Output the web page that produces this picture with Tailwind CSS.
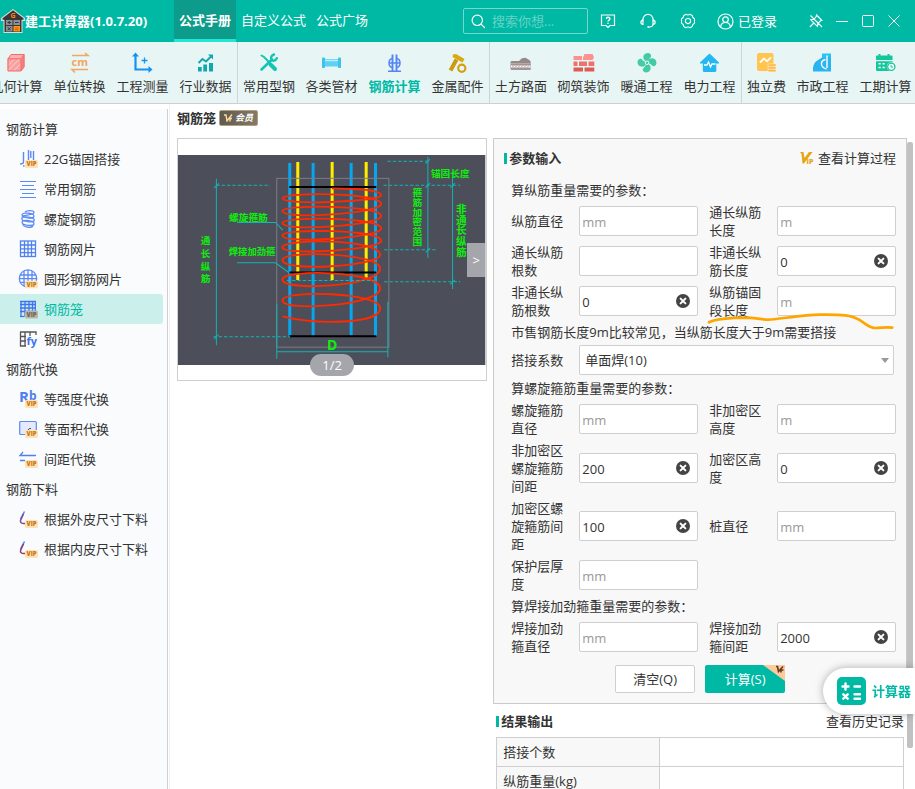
<!DOCTYPE html>
<html lang="zh-CN">
<head>
    <meta charset="UTF-8">
    <meta name="viewport" content="width=device-width, initial-scale=1.0">
    <title>建工计算器</title>
    <script src="https://cdn.jsdelivr.net/npm/@tailwindcss/browser@4"></script>
    <style>
        body {
            font-family: 'Open Sans', 'Noto Sans CJK SC', sans-serif;
        }
    </style>
</head>
<body class="h-screen overflow-hidden flex flex-col bg-white text-[13px] leading-[18px] text-[#333]">

    <!-- shared symbols -->
    <svg class="hidden">
        <symbol id="vip" viewBox="0 0 13 8">
            <rect width="13" height="8" rx="1.5" fill="#ffe2b3" stroke="none"/>
            <text x="6.5" y="6.3" text-anchor="middle" font-size="6" font-weight="800" fill="#c8781a" stroke="none">VIP</text>
        </symbol>
        <symbol id="clear" viewBox="0 0 14 14">
            <circle cx="7" cy="7" r="7" fill="#444"/>
            <path d="M4.6 4.6l4.8 4.8M9.4 4.6l-4.8 4.8" stroke="#fff" stroke-width="2" stroke-linecap="round"/>
        </symbol>
    </svg>

    <!-- title bar -->
    <header class="h-[42px] shrink-0 flex items-center bg-[#00b9a5] text-white overflow-hidden">
        <svg class="w-6 h-6 ml-px shrink-0" viewBox="0 0 24 24">
            <path d="M12 0L0 9v3h2.500V24h19V12H24V9z" fill="#d9dcdc"/>
            <path d="M12 1.200L1.500 9.300v1.500h2V23h17V10.800h2V9.300z" fill="#3b3536"/>
            <text x="12" y="9" text-anchor="middle" font-size="7" font-weight="700" fill="#f08c1a">G</text>
            <path d="M5 11h6.500v5H5zM12.500 11H19v5h-6.500zM5 17h6.500v5.500H5z" fill="#8b8f96"/>
            <path d="M12.500 17H19v5.500h-6.500z" fill="#ff9416"/>
            <path d="M6.500 13.500h3.500M8.200 12v3M14 13.500h3.500M6.700 18.200l3 3M9.700 18.200l-3 3" stroke="#333" stroke-width="1"/>
            <path d="M14 19h3.500M14 20.700h3.500" stroke="#b35c00" stroke-width=".8"/>
        </svg>
        <h1 class="w-[149px] shrink-0 font-bold whitespace-nowrap">建工计算器(1.0.7.20)</h1>
        <nav class="h-full flex items-center shrink-0">
            <a href="#" class="h-full px-[5px] pt-[11px] bg-[#0d9b8b] border-b-[3px] border-[#22e6d2] font-bold">公式手册</a>
            <a href="#" class="px-[5px] -mt-[3px]">自定义公式</a>
            <a href="#" class="px-[5px] -mt-[3px]">公式广场</a>
        </nav>
        <div class="flex-1"></div>
        <label class="w-[125px] h-[26px] shrink-0 flex items-center border border-[#73d8ce] rounded-xs">
            <svg class="w-[15px] h-[15px] ml-[7px] shrink-0" viewBox="0 0 15 15" fill="none" stroke="#fff" stroke-width="1.200" stroke-linecap="round"><circle cx="6.300" cy="6.300" r="5.200"/><path d="M10.300 10.300L13.500 13.500"/></svg>
            <input type="text" aria-label="搜索" placeholder="搜索你想..." class="min-w-0 flex-1 pl-[6px] outline-none placeholder:text-[#66d3c8]">
        </label>
        <button aria-label="帮助" class="w-10 shrink-0 flex justify-center">
            <svg class="w-4 h-4" viewBox="0 0 16 16" fill="none" stroke="#fff" stroke-width="1.200"><path d="M1.500 2h13v10.500H10L8 14.500 6 12.500H1.500z"/><path d="M6.300 6c0-2.300 3.600-2.200 3.600-.2C9.900 7.200 8 7 8 8.600" stroke-width="1.400"/><path d="M8 9.700v1.200" stroke-width="1.400"/></svg>
        </button>
        <button aria-label="客服" class="w-10 shrink-0 flex justify-center">
            <svg class="w-4 h-4" viewBox="0 0 16 16" fill="none" stroke="#fff" stroke-width="1.200"><path d="M2.800 7.500C2.800-.8 13.200-.8 13.200 7.500"/><path d="M3 7.200C.2 7.200.2 11.500 3 11.500zM13 7.200c2.800 0 2.800 4.300 0 4.300z"/><path d="M13 11.500c-.3 1.700-1.500 2.400-3.500 2.500" /><path d="M7.500 14h2" stroke-width="1.800"/></svg>
        </button>
        <button aria-label="设置" class="w-10 shrink-0 flex justify-center">
            <svg class="w-4 h-4" viewBox="0 0 16 16" fill="none" stroke="#fff" stroke-width="1.100" stroke-linejoin="round"><path d="M6 1.300Q8 2.600 10 1.300L12.200 2.500Q12.300 4.700 14.500 5.700V8 10.300Q12.300 11.300 12.200 13.500L10 14.700Q8 13.400 6 14.700L3.800 13.500Q3.700 11.300 1.500 10.300V5.700Q3.700 4.700 3.800 2.500z"/><path d="M8 5.200l2.500 1.400v2.800L8 10.800 5.500 9.400V6.600z"/></svg>
        </button>
        <button class="w-[86px] pl-[9px] shrink-0 flex items-center gap-1">
            <svg class="w-[17px] h-[17px]" viewBox="0 0 17 17" fill="none" stroke="#fff" stroke-width="1.200"><circle cx="8.500" cy="8.500" r="7.500"/><circle cx="8.500" cy="6.600" r="2.800"/><path d="M3.700 14c.3-6 9.300-6 9.600 0"/></svg>
            已登录
        </button>
        <button aria-label="置顶" class="w-[26px] ml-[9px] shrink-0 flex justify-center">
            <svg class="w-[14px] h-[14px]" viewBox="0 0 14 14" fill="none" stroke="#fff" stroke-width="1.100"><path d="M7.500 1l5.500 5.500-1.500.3-2.600 2.600-.5 3L1.800 5.800l3-.5 2.500-2.700zM4.800 9L.8 13M1.500 1.500l11.500 11.500"/></svg>
        </button>
        <button aria-label="最小化" class="w-[26px] shrink-0 flex justify-center">
            <svg class="w-[14px] h-[14px]" viewBox="0 0 14 14" stroke="#fff"><path d="M1 7.500h12"/></svg>
        </button>
        <button aria-label="最大化" class="w-[26px] shrink-0 flex justify-center">
            <svg class="w-[14px] h-[14px]" viewBox="0 0 14 14" fill="none" stroke="#fff"><rect x="1.500" y="1.500" width="11" height="11" rx="1"/></svg>
        </button>
        <button aria-label="关闭" class="w-[26px] mr-2 shrink-0 flex justify-center">
            <svg class="w-[14px] h-[14px]" viewBox="0 0 14 14" fill="none" stroke="#fff"><path d="M1.500 1.500l11 11M12.500 1.500l-11 11"/></svg>
        </button>
    </header>

    <!-- category bar -->
    <nav class="h-[62px] shrink-0 flex bg-[#e7f6f5] border-b border-[#cfcfd3] overflow-hidden whitespace-nowrap">
        <div class="flex shrink-0 -ml-[15px]">
            <a href="#" class="w-[63px] pt-[9px] flex flex-col items-center gap-[2px]">
                <svg class="w-6 h-6" viewBox="0 0 24 24"><path d="M2.500 8L6 3.500h13.500L16 8z" fill="#ffb0b0"/><path d="M16 8l3.500-4.500V16L16 20z" fill="#f78080"/><rect x="2.500" y="7.500" width="13.500" height="12.500" rx="1" fill="#f9a0a0"/><path d="M3.500 14l6-6M3.500 19L14.500 8M9 19.500l6.500-6.500" stroke="#ffd6d6"/><path d="M3 7.800L6 3.500h13V16l-3 4H3z M3 7.800h13V20M16 7.800l3-4.300" fill="none" stroke="#f56b6b"/></svg>
                几何计算
            </a>
            <a href="#" class="w-[63px] pt-[9px] flex flex-col items-center gap-[2px]">
                <svg class="w-6 h-6" viewBox="0 0 24 24" fill="none" stroke="#f0a762" stroke-width="1.600"><path d="M4 4.500h16L17 2M20 18.500H4l3 3"/><text x="11.800" y="15" text-anchor="middle" font-size="11" font-weight="700" fill="#f0a762" stroke="none">cm</text></svg>
                单位转换
            </a>
            <a href="#" class="w-[63px] pt-[9px] flex flex-col items-center gap-[2px]">
                <svg class="w-6 h-6" viewBox="0 0 24 24" fill="none" stroke="#1493f0" stroke-width="2.200"><path d="M4.500 4v14.500H19"/><path d="M4.500 1.500L8 5.500H1zM21.500 18.500l-4-3.500v7z" fill="#1493f0" stroke="none"/><path d="M13.500 6.500v6M10.500 9.500h6" stroke-width="1.300"/></svg>
                工程测量
            </a>
            <a href="#" class="w-[63px] pt-[9px] flex flex-col items-center gap-[2px]">
                <svg class="w-6 h-6" viewBox="0 0 24 24"><path d="M4 16h3.700v4.500H4zM9.300 13.500H13v7H9.300zM15 12h4v8.500h-4z" fill="#12a7b0"/><path d="M4.500 12l4-4 3.500 2.500L17 5.500" fill="none" stroke="#12a7b0" stroke-width="1.900"/><path d="M14 3.500h5v5z" fill="#12a7b0"/></svg>
                行业数据
            </a>
        </div>
        <div class="flex shrink-0">
            <a href="#" class="w-[63px] pt-[9px] flex flex-col items-center gap-[2px] border-l border-[#cfd3d6]">
                <svg class="w-6 h-6" viewBox="0 0 24 24" fill="none" stroke="#16c4b4" stroke-linecap="round"><path d="M4.500 4.500L7 6l6 6" stroke-width="2"/><path d="M13.500 13.500l4.500 4.500" stroke-width="4"/><path d="M4.500 18.500L15 8.500" stroke-width="2.600"/><path d="M17 3.500c-3 1-3.500 3-2.500 5s4 1.500 5.300-1.300" stroke-width="2.400"/></svg>
                常用型钢
            </a>
            <a href="#" class="w-[63px] pt-[9px] flex flex-col items-center gap-[2px]">
                <svg class="w-6 h-6" viewBox="0 0 24 24"><rect x="4" y="8" width="15" height="7.500" fill="#5dd2f2"/><path d="M4 9.500h15" stroke="#b5f0fc" stroke-width="1.500"/><rect x="2" y="6.500" width="3" height="10.500" rx=".8" fill="#3fc3ea"/><rect x="18" y="6.500" width="3" height="10.500" rx=".8" fill="#3fc3ea"/></svg>
                各类管材
            </a>
            <a href="#" class="w-[63px] pt-[9px] flex flex-col items-center gap-[2px] font-bold text-[#00b9a5]">
                <svg class="w-6 h-6" viewBox="0 0 24 24" fill="none" stroke="#5585f5" stroke-width="1.500"><path d="M9.500 3.500v17M13.500 3.500v17" stroke-width="1.900"/><path d="M9 7.500c-4 1-4 8 0 9M14 7.500c4 1 4 8 0 9M6.500 12h10M5 20.300h13"/></svg>
                钢筋计算
            </a>
            <a href="#" class="w-[63px] pt-[9px] flex flex-col items-center gap-[2px]">
                <svg class="w-6 h-6" viewBox="0 0 24 24" fill="none"><path d="M10.500 8.500L4.500 19.500" stroke="#c99a12" stroke-width="4"/><path d="M7 3.500l3-.5L18.500 8l-2 3.500L6.500 6z" fill="#dba90f"/><path d="M12.800 13.200h5l2.600 4-2.600 4h-5l-2.400-4z" fill="#e7f6f5"/><circle cx="15.800" cy="17.200" r="3.600" stroke="#d2a010" stroke-width="2.200"/></svg>
                金属配件
            </a>
        </div>
        <div class="flex shrink-0">
            <a href="#" class="w-[63px] pt-[9px] flex flex-col items-center gap-[2px] border-l border-[#cfd3d6]">
                <svg class="w-6 h-6" viewBox="0 0 24 24"><path d="M1.500 11Q1.500 10 3 10h7q3-4 7-3l4 2.500.8 2v1H1.500z" fill="#97898a"/><path d="M1.500 12.500h20.300V18q0 1-1 1H2.500q-1 0-1-1z" fill="#a39596"/><path d="M2 15.500h19.500" stroke="#fff" stroke-width="2"/><path d="M3 16.500l2-2M6 16.500l2-2M9 16.500l2-2M12 16.500l2-2M15 16.500l2-2M18 16.500l2-2" stroke="#8a7b7c" stroke-width=".8"/></svg>
                土方路面
            </a>
            <a href="#" class="w-[63px] pt-[9px] flex flex-col items-center gap-[2px]">
                <svg class="w-6 h-6" viewBox="0 0 24 24"><path d="M1.500 5H10v4H1.500zM11 6.500L12.500 3h8l1.500 3.500L20.500 9H11z" fill="#fb9290"/><path d="M1.500 10.500h4V15h-4zM7 10.500h8V15H7zM16.500 10.500h5.800V15h-5.800z" fill="#ee716d"/><path d="M1.500 16.500H11v4H1.500zM12.500 16.500h9.800v4h-9.800z" fill="#e05a55"/></svg>
                砌筑装饰
            </a>
            <a href="#" class="w-[63px] pt-[9px] flex flex-col items-center gap-[2px]">
                <svg class="w-6 h-6" viewBox="0 0 24 24" fill="#43cba6"><path d="M12 11C6 8 8 2 13 2c3.500.5 4 3.500 2 5-1.500 1-1.500 3-3 4z"/><path d="M12 11C15 5 21.500 7 21.500 12c-.5 3.500-3.500 4-5 2-1-1.500-3-1.500-4.500-3z"/><path d="M12 12c6 3 4 9.500-1 9.500-3.500-.5-4-3.500-2-5 1.500-1 1.500-3 3-4.500z"/><path d="M12 12C9 18 2.500 16 2.500 11c.5-3.500 3.500-4 5-2 1 1.500 3 1.500 4.500 3z"/><circle cx="12" cy="11.700" r="2.200" fill="#e7f6f5"/><circle cx="12" cy="11.700" r="1.200"/></svg>
                暖通工程
            </a>
            <a href="#" class="w-[63px] pt-[9px] flex flex-col items-center gap-[2px]">
                <svg class="w-6 h-6" viewBox="0 0 24 24"><path d="M11.500 2.500L2 11.500v1h2.800v7q0 1.500 1.500 1.500h10.500q1.500 0 1.500-1.500v-7H21v-1z" fill="#23b7f4"/><path d="M6 14h3l1.500-3 2 5 1.500-3h3.500" fill="none" stroke="#fff" stroke-width="1.300"/></svg>
                电力工程
            </a>
        </div>
        <div class="flex shrink-0">
            <a href="#" class="w-[50px] pt-[9px] flex flex-col items-center gap-[2px] border-l border-[#cfd3d6]">
                <svg class="w-6 h-6" viewBox="0 0 24 24"><rect x="2" y="2" width="16.500" height="18" rx="2" fill="#ffc550"/><path d="M5 11.500L9 7.500l3 2.800 4-4" fill="none" stroke="#fff" stroke-width="1.800"/><path d="M13 13h8v2.200h-8zM13 15.800h8V18h-8zM13 18.600h8v2.200h-8z" fill="#fbb13a" stroke="#fff0cf" stroke-width=".6"/></svg>
                独立费
            </a>
            <a href="#" class="w-[63px] pt-[9px] flex flex-col items-center gap-[2px]">
                <svg class="w-6 h-6" viewBox="0 0 24 24"><path d="M2 20.500V17C3 9.500 8.500 5 20 3v17.500z" fill="#28b4f0"/><path d="M11 2.500h9v3L11 7z" fill="#28c4f5"/><path d="M2 10.500L11 2.500v4L4 11z" fill="#e7f6f5"/><path d="M16 4.500v12.500M14.500 8.500c-6 1.500-5 8 1 9.500" fill="none" stroke="#fff" stroke-width="1.400"/></svg>
                市政工程
            </a>
            <a href="#" class="w-[63px] pt-[9px] flex flex-col items-center gap-[2px]">
                <svg class="w-6 h-6" viewBox="0 0 24 24"><path d="M2 9V5.500q0-1 1-1h1.500V3h2v1.500h7V3h2v1.500h2q1 0 1 1V9zM2 10.200h16.500V20H3q-1 0-1-1z" fill="#14c79a"/><path d="M4.500 12.800h2.200M8.500 12.800h2.200M4.500 16.500h2.200M8.500 16.500h2.200" stroke="#fff" stroke-width="1.600"/><circle cx="17.300" cy="15.800" r="4.500" fill="#e7f6f5"/><circle cx="17.300" cy="15.800" r="3.600" fill="#fff" stroke="#14c79a" stroke-width="1.300"/><path d="M17 13.800v2.300h2" fill="none" stroke="#14c79a"/></svg>
                工期计算
            </a>
        </div>
    </nav>

    <div class="flex-1 min-h-0 flex">

        <!-- side menu -->
        <aside class="w-[168px] shrink-0 mt-[5px] pt-[5px] bg-[#f9fbfd] border-r border-[#cfcfcf]">
            <h2 class="h-[30px] pl-[6px] flex items-center">钢筋计算</h2>
            <a href="#" class="h-[30px] pl-[18px] flex items-center gap-[6px]">
                <svg class="w-5 h-5" viewBox="0 0 20 20" fill="none" stroke="#5b8af5" stroke-width="1.400"><path d="M5.500 3v10q0 2-3.500 2M10.500 1v12M15.500 2v10M12.800 2v7" /><path d="M5 17h3" stroke-dasharray="1.500 1"/><use href="#vip" x="7" y="11" width="13" height="8"/></svg>
                22G锚固搭接
            </a>
            <a href="#" class="h-[30px] pl-[18px] flex items-center gap-[6px]">
                <svg class="w-5 h-5" viewBox="0 0 20 20" stroke="#5b8af5" stroke-width="1.200"><path d="M2 2.500h16M4 6.500h12M2 10.500h16M4 14.500h12M2 18.500h16"/></svg>
                常用钢筋
            </a>
            <a href="#" class="h-[30px] pl-[18px] flex items-center gap-[6px]">
                <svg class="w-5 h-5" viewBox="0 0 20 20" fill="none" stroke="#5b8af5" stroke-width="1.300"><path d="M7 3c2-2 9-2 9 .5S5 6 4 7.500"/><ellipse cx="10" cy="6.500" rx="6" ry="2.300" transform="rotate(8 10 6.500)"/><ellipse cx="10" cy="10.300" rx="6.300" ry="2.300" transform="rotate(8 10 10.300)"/><ellipse cx="10" cy="14" rx="6" ry="2.300" transform="rotate(8 10 14)"/><path d="M5 15c0 3 8 4.500 10 2"/></svg>
                螺旋钢筋
            </a>
            <a href="#" class="h-[30px] pl-[18px] flex items-center gap-[6px]">
                <svg class="w-5 h-5" viewBox="0 0 20 20" fill="none" stroke="#4f80f0" stroke-width="1.300"><rect x="2.500" y="2" width="15" height="15.500"/><path d="M6.500 2v15.500M10 2v15.500M13.500 2v15.500M2.500 6h15M2.500 9.800h15M2.500 13.600h15"/></svg>
                钢筋网片
            </a>
            <a href="#" class="h-[30px] pl-[18px] flex items-center gap-[6px]">
                <svg class="w-5 h-5" viewBox="0 0 20 20" fill="none" stroke="#5b8af5" stroke-width="1.300"><circle cx="10" cy="9.500" r="8.700"/><path d="M6 2v15M10 1v17M14 2v15M2 6h16M1.500 9.700h17M2 13.400h16"/><use href="#vip" x="7" y="11.500" width="13" height="8"/></svg>
                圆形钢筋网片
            </a>
            <a href="#" class="h-[30px] mr-1 pl-[18px] flex items-center gap-[6px] bg-[#cbf0eb] text-[#00b9a5] rounded-r-[3px]">
                <svg class="w-5 h-5" viewBox="0 0 20 20" fill="none" stroke="#3f74ee" stroke-width="1.300"><path d="M2 2.500h16M2 5.500h16M2 9h16M2 12.500h16M3 2v16M7 2v16M11 2v16M14.500 2v16M17.300 2v12"/><path d="M2 17.500h4" /><rect x="7" y="11.500" width="13" height="8" rx="1.500" fill="#b9b5a5" stroke="none"/><text x="13.500" y="17.800" text-anchor="middle" font-size="6" font-weight="800" fill="#6e675c" stroke="none">VIP</text></svg>
                钢筋笼
            </a>
            <a href="#" class="h-[30px] pl-[18px] flex items-center gap-[6px]">
                <svg class="w-5 h-5" viewBox="0 0 20 20" fill="none" stroke="#555" stroke-width="1.300"><path d="M2 3h16v3M2.500 3v14H8M2 7.500h6M2 12h6M7 3v14M12 3v4"/><text x="8.500" y="15.500" font-size="11" font-weight="700" fill="#3f74ee" stroke="none">fy</text></svg>
                钢筋强度
            </a>
            <h2 class="h-[30px] pl-[6px] flex items-center">钢筋代换</h2>
            <a href="#" class="h-[30px] pl-[18px] flex items-center gap-[6px]">
                <svg class="w-5 h-5 overflow-visible" viewBox="0 0 20 20"><text x="1" y="12.500" font-size="15" font-weight="700" fill="#4f80f0">R<tspan y="10.500" font-size="12">b</tspan></text><use href="#vip" x="7" y="11" width="13" height="8"/></svg>
                等强度代换
            </a>
            <a href="#" class="h-[30px] pl-[18px] flex items-center gap-[6px]">
                <svg class="w-5 h-5" viewBox="0 0 20 20"><rect x="1.700" y="2.500" width="16.600" height="13" rx="1" fill="#e3eafc" stroke="#5b8af5" stroke-width="1.200"/><path d="M10 11q1-2 3-1.500" fill="none" stroke="#444"/><use href="#vip" x="7" y="11" width="13" height="8"/></svg>
                等面积代换
            </a>
            <a href="#" class="h-[30px] pl-[18px] flex items-center gap-[6px]">
                <svg class="w-5 h-5" viewBox="0 0 20 20" fill="none" stroke="#4f80f0" stroke-width="1.300"><path d="M5 3L2 6.500h16M2 11.500h5"/><use href="#vip" x="7" y="11" width="13" height="8"/></svg>
                间距代换
            </a>
            <h2 class="h-[30px] pl-[6px] flex items-center">钢筋下料</h2>
            <a href="#" class="h-[30px] pl-[18px] flex items-center gap-[6px]">
                <svg class="w-5 h-5" viewBox="0 0 20 20" fill="none"><path d="M6.500 2.500L2.500 10" stroke="#4f80f0" stroke-width="1.500"/><path d="M5.500 5L2.500 11.500Q2 15 7 14.500" stroke="#7a4a9c" stroke-width="1.500"/><use href="#vip" x="7" y="11" width="13" height="8"/></svg>
                根据外皮尺寸下料
            </a>
            <a href="#" class="h-[30px] pl-[18px] flex items-center gap-[6px]">
                <svg class="w-5 h-5" viewBox="0 0 20 20" fill="none"><path d="M6.500 2.500L2.500 10" stroke="#4f80f0" stroke-width="1.500"/><path d="M5.500 5L2.500 11.500Q2 15 7 14.500" stroke="#8c3f6c" stroke-width="1.500"/><use href="#vip" x="7" y="11" width="13" height="8"/></svg>
                根据内皮尺寸下料
            </a>
        </aside>

        <main class="relative flex-1 min-w-0 ml-px border-l border-[#f0f0f0] pl-[7px] pr-2">
            <div class="h-[34px] flex items-start pt-[5px] gap-[3px]">
                <h2 class="font-bold">钢筋笼</h2>
                <span class="w-[39px] h-4 mt-px flex items-center justify-center gap-[2px] rounded-xs border border-[#b39f7c] bg-linear-to-r from-[#5e5a50] to-[#857a64] text-[9px] leading-[14px] font-bold italic text-white">
                    <svg class="w-[9px] h-2" viewBox="0 0 9 8" fill="none" stroke="#ffd9a0" stroke-width="1.400"><path d="M0 1h2l1 6 5-6.500M6 7.500V4.500h2"/></svg>会员
                </span>
            </div>

            <div class="grid grid-cols-[3fr_4fr] gap-[6px] items-start">

                <!-- drawing preview -->
                <figure class="relative border border-[#cfcfcf] pt-4 pb-[15px]">
                    <svg class="block w-full" viewBox="24 150 924 630" fill="none">
                        <rect x="24" y="150" width="921" height="630" fill="#4c4e59"/>
                        <g stroke="#06a7f0" stroke-width="9"><path d="M359 174V692M429 174V692M543 174V692M616 174V692"/></g>
                        <g stroke="#ffee00" stroke-width="9"><path d="M383 171V525M486 171V525M588 171V525"/></g>
                        <rect x="320" y="220" width="336" height="506" stroke="#7b7d86" stroke-width="3"/>
                        <path d="M360 246H616M360 502H616M360 693H616" stroke="#000" stroke-width="6" stroke-linecap="round"/>
                        <path d="M485 250C560 250 633 256 633 270C633 290 337 302 337 280C337 260 633 262 633 297C633 325 337 345 337 318C337 297 633 300 633 333C633 361 337 381 337 354C337 333 633 336 633 370C633 398 337 418 337 391C337 370 633 373 633 407C633 435 337 452 337 427C337 400 630 400 630 450C630 482 337 502 337 465C337 434 630 444 630 490C630 545 337 560 337 523C337 492 630 496 630 550C630 600 337 622 337 585C337 555 630 560 630 610C630 656 440 660 337 634" stroke="#ff2a00" stroke-width="5.500"/>
                        <g stroke="#12b5b5" stroke-width="3">
                            <path d="M139 221V720M320 597V761M653 590V756M320 740H653M773 155V459M847 200V552"/>
                            <path d="M201 352H316L338 375M201 473H316L357 503"/>
                            <path d="M132 249L146 235M132 702L146 688M766 176L780 162M766 248L780 234M766 442L780 428M840 248L854 234M840 538L854 524"/>
                            <path d="M139 241H300M130 695H360M350 526H610M652 169H780M640 241H870M642 434H800M642 530H870" stroke-dasharray="10 6"/>
                        </g>
                        <g fill="#0cf00c" font-weight="700" font-size="29" text-anchor="middle">
                            <text x="235" y="347">螺旋箍筋</text>
                            <text x="246" y="449" font-size="28">焊接加劲箍</text>
                            <text x="840" y="217">锚固长度</text>
                            <text x="486" y="735" font-size="42">D</text>
                            <text><tspan x="107" y="418">通</tspan><tspan x="107" y="456">长</tspan><tspan x="107" y="494">纵</tspan><tspan x="107" y="531">筋</tspan></text>
                            <text x="740" y="335" writing-mode="vertical-rl">箍筋加密范围</text>
                            <text x="872" y="376" font-size="32" writing-mode="vertical-rl">非通长纵筋</text>
                        </g>
                    </svg>
                    <button aria-label="下一张" class="absolute right-px top-1/2 -translate-y-1/2 w-[18px] h-[34px] bg-[#a5a6ac] text-white">&gt;</button>
                    <figcaption class="absolute left-1/2 -translate-x-1/2 bottom-1 w-11 h-[22px] rounded-full bg-[#a5a6ac] text-white text-center leading-[22px]">1/2</figcaption>
                </figure>

                <div>
                    <!-- input parameters -->
                    <form class="border border-[#cbcbcb] bg-[#f8f8f8] pt-[10px] pb-[10px] pl-[17px] pr-[10px] flex flex-col gap-1">
                        <div class="flex items-center -ml-[7px] mb-[10px]">
                            <span class="w-[3px] h-[11px] bg-[#00b9a5]"></span>
                            <h3 class="ml-[2px] font-bold">参数输入</h3>
                            <a href="#" class="ml-auto flex items-center gap-1">
                                <svg class="w-[14px] h-3" viewBox="0 0 14 12"><path d="M0 0h3.500l1 6L9 0h3.500L4 11.500H2.500L1.500 2z" fill="#e8a317"/><text x="6.500" y="12" font-size="7" font-weight="800" fill="#e8a317">IP</text></svg>
                                查看计算过程
                            </a>
                        </div>

                        <p>算纵筋重量需要的参数：</p>
                        <div class="grid grid-cols-2 gap-x-[11px] gap-y-1">
                            <div class="flex items-center min-h-9">
                                <label for="barDia" class="w-[68px] pr-3 shrink-0">纵筋直径</label>
                                <input id="barDia" type="text" placeholder="mm" class="min-w-0 flex-1 h-[30px] px-[2px] pt-px bg-white border border-[#cfcfcf] rounded-xs placeholder:text-[#999]">
                            </div>
                            <div class="flex items-center min-h-9">
                                <label for="fullLen" class="w-[68px] pr-3 shrink-0">通长纵筋长度</label>
                                <input id="fullLen" type="text" placeholder="m" class="min-w-0 flex-1 h-[30px] px-[2px] pt-px bg-white border border-[#cfcfcf] rounded-xs placeholder:text-[#999]">
                            </div>
                            <div class="flex items-center min-h-9">
                                <label for="fullCount" class="w-[68px] pr-3 shrink-0">通长纵筋根数</label>
                                <input id="fullCount" type="text" class="min-w-0 flex-1 h-[30px] px-[2px] pt-px bg-white border border-[#cfcfcf] rounded-xs">
                            </div>
                            <div class="relative flex items-center min-h-9">
                                <label for="partLen" class="w-[68px] pr-3 shrink-0">非通长纵筋长度</label>
                                <input id="partLen" type="text" value="0" class="min-w-0 flex-1 h-[30px] px-[2px] pt-px bg-white border border-[#cfcfcf] rounded-xs">
                                <button type="button" aria-label="清除" class="absolute right-2"><svg class="w-[14px] h-[14px]"><use href="#clear"/></svg></button>
                            </div>
                            <div class="relative flex items-center min-h-9">
                                <label for="partCount" class="w-[68px] pr-3 shrink-0">非通长纵筋根数</label>
                                <input id="partCount" type="text" value="0" class="min-w-0 flex-1 h-[30px] px-[2px] pt-px bg-white border border-[#cfcfcf] rounded-xs">
                                <button type="button" aria-label="清除" class="absolute right-2"><svg class="w-[14px] h-[14px]"><use href="#clear"/></svg></button>
                            </div>
                            <div class="relative flex items-center min-h-9">
                                <label for="anchorLen" class="w-[68px] pr-3 shrink-0">纵筋锚固段长度</label>
                                <input id="anchorLen" type="text" placeholder="m" class="min-w-0 flex-1 h-[30px] px-[2px] pt-px bg-white border border-[#cfcfcf] rounded-xs placeholder:text-[#999]">
                                <!-- hand-drawn underline -->
                                <svg class="absolute left-0 top-0 w-full overflow-visible pointer-events-none" viewBox="657 459 561 108" fill="none"><path d="M657 577C680 565 720 563 775 563C805 564 815 569 835 569C860 569 940 554 990 554C1060 553 1085 556 1105 568C1125 578 1135 593 1155 594C1175 594 1185 591 1207 593" stroke="#ffa500" stroke-width="8" stroke-linecap="round"/></svg>
                            </div>
                        </div>

                        <p class="whitespace-nowrap">市售钢筋长度9m比较常见，当纵筋长度大于9m需要搭接</p>
                        <div class="relative flex items-center pr-[2px]">
                            <label for="lap" class="w-[68px] shrink-0">搭接系数</label>
                            <select id="lap" class="appearance-none min-w-0 flex-1 h-[30px] px-[5px] bg-white border border-[#cfcfcf] rounded-xs">
                                <option>单面焊(10)</option>
                                <option>双面焊(5)</option>
                            </select>
                            <svg class="absolute right-[7px] w-2 h-[5px] pointer-events-none" viewBox="0 0 8 5"><path d="M0 0h8L4 5z" fill="#999"/></svg>
                        </div>

                        <p>算螺旋箍筋重量需要的参数：</p>
                        <div class="grid grid-cols-2 gap-x-[11px] gap-y-1">
                            <div class="flex items-center min-h-9">
                                <label for="spiralDia" class="w-[68px] pr-3 shrink-0">螺旋箍筋直径</label>
                                <input id="spiralDia" type="text" placeholder="mm" class="min-w-0 flex-1 h-[30px] px-[2px] pt-px bg-white border border-[#cfcfcf] rounded-xs placeholder:text-[#999]">
                            </div>
                            <div class="flex items-center min-h-9">
                                <label for="looseHeight" class="w-[68px] pr-3 shrink-0">非加密区高度</label>
                                <input id="looseHeight" type="text" placeholder="m" class="min-w-0 flex-1 h-[30px] px-[2px] pt-px bg-white border border-[#cfcfcf] rounded-xs placeholder:text-[#999]">
                            </div>
                            <div class="relative flex items-center min-h-9">
                                <label for="looseGap" class="w-[68px] pr-3 shrink-0">非加密区螺旋箍筋间距</label>
                                <input id="looseGap" type="text" value="200" class="min-w-0 flex-1 h-[30px] px-[2px] pt-px bg-white border border-[#cfcfcf] rounded-xs">
                                <button type="button" aria-label="清除" class="absolute right-2"><svg class="w-[14px] h-[14px]"><use href="#clear"/></svg></button>
                            </div>
                            <div class="relative flex items-center min-h-9">
                                <label for="denseHeight" class="w-[68px] pr-3 shrink-0">加密区高度</label>
                                <input id="denseHeight" type="text" value="0" class="min-w-0 flex-1 h-[30px] px-[2px] pt-px bg-white border border-[#cfcfcf] rounded-xs">
                                <button type="button" aria-label="清除" class="absolute right-2"><svg class="w-[14px] h-[14px]"><use href="#clear"/></svg></button>
                            </div>
                            <div class="relative flex items-center min-h-9">
                                <label for="denseGap" class="w-[68px] pr-3 shrink-0">加密区螺旋箍筋间距</label>
                                <input id="denseGap" type="text" value="100" class="min-w-0 flex-1 h-[30px] px-[2px] pt-px bg-white border border-[#cfcfcf] rounded-xs">
                                <button type="button" aria-label="清除" class="absolute right-2"><svg class="w-[14px] h-[14px]"><use href="#clear"/></svg></button>
                            </div>
                            <div class="flex items-center min-h-9">
                                <label for="pileDia" class="w-[68px] pr-3 shrink-0">桩直径</label>
                                <input id="pileDia" type="text" placeholder="mm" class="min-w-0 flex-1 h-[30px] px-[2px] pt-px bg-white border border-[#cfcfcf] rounded-xs placeholder:text-[#999]">
                            </div>
                            <div class="flex items-center min-h-9">
                                <label for="cover" class="w-[68px] pr-3 shrink-0">保护层厚度</label>
                                <input id="cover" type="text" placeholder="mm" class="min-w-0 flex-1 h-[30px] px-[2px] pt-px bg-white border border-[#cfcfcf] rounded-xs placeholder:text-[#999]">
                            </div>
                        </div>

                        <p>算焊接加劲箍重量需要的参数：</p>
                        <div class="grid grid-cols-2 gap-x-[11px] gap-y-1">
                            <div class="flex items-center min-h-9">
                                <label for="hoopDia" class="w-[68px] pr-3 shrink-0">焊接加劲箍直径</label>
                                <input id="hoopDia" type="text" placeholder="mm" class="min-w-0 flex-1 h-[30px] px-[2px] pt-px bg-white border border-[#cfcfcf] rounded-xs placeholder:text-[#999]">
                            </div>
                            <div class="relative flex items-center min-h-9">
                                <label for="hoopGap" class="w-[68px] pr-3 shrink-0">焊接加劲箍间距</label>
                                <input id="hoopGap" type="text" value="2000" class="min-w-0 flex-1 h-[30px] px-[2px] pt-px bg-white border border-[#cfcfcf] rounded-xs">
                                <button type="button" aria-label="清除" class="absolute right-2"><svg class="w-[14px] h-[14px]"><use href="#clear"/></svg></button>
                            </div>
                        </div>

                        <div class="mt-[6px] flex justify-center gap-[10px] pr-[7px]">
                            <button type="reset" class="w-20 h-7 bg-white border border-[#cfcfcf] rounded-xs">清空(Q)</button>
                            <button type="submit" class="relative w-20 h-7 bg-[#00b9a5] text-white rounded-xs overflow-hidden">计算(S)
                                <svg class="absolute right-0 top-0 w-[22px] h-4" viewBox="0 0 22 16"><path d="M0 0h22v16z" fill="#fbcb9c"/><path d="M13 1.500h1.500l1 5L20 1.500M18 7.500V5h2.500" fill="none" stroke="#6b3a1c" stroke-width="1.600"/></svg>
                            </button>
                        </div>
                    </form>

                    <!-- results -->
                    <section class="pl-[3px] pr-[3px]">
                        <div class="flex items-center mt-2 mb-[7px]">
                            <span class="w-[3px] h-[11px] bg-[#00b9a5]"></span>
                            <h3 class="ml-[2px] font-bold">结果输出</h3>
                            <a href="#" class="ml-auto">查看历史记录</a>
                        </div>
                        <table class="w-full border-collapse text-left">
                            <tr>
                                <th class="w-2/5 h-[29px] pl-[6px] font-normal bg-[#f8f8f8] border border-[#cfcfcf]">搭接个数</th>
                                <td class="border border-[#cfcfcf]"></td>
                            </tr>
                            <tr>
                                <th class="h-[29px] pl-[6px] font-normal bg-[#f8f8f8] border border-[#cfcfcf]">纵筋重量(kg)</th>
                                <td class="border border-[#cfcfcf]"></td>
                            </tr>
                        </table>
                    </section>
                </div>
            </div>

            <!-- scrollbar thumb -->
            <div class="absolute right-[2px] top-[38px] bottom-[41px] w-[6px] rounded-[2px] bg-[#c1c1c1]"></div>
        </main>
    </div>

    <button class="fixed right-0 bottom-[75px] h-[46px] pl-[14px] pr-1 flex items-center gap-[6px] bg-white rounded-l-full shadow-[0_0_8px_rgba(0,0,0,0.3)] font-bold text-[#00b9a5]">
        <svg class="w-[29px] h-7" viewBox="0 0 29 28"><rect width="29" height="28" rx="5" fill="#00b9a5"/><path d="M5.500 9.500h6M8.500 6.500v6M17.500 9.500h5.500M6.300 17.300l4.400 4.400M10.700 17.300l-4.400 4.400M17.500 17.200h5.500M17.500 21.800h5.500" stroke="#fff" stroke-width="2.400" stroke-linecap="round"/></svg>
        计算器
    </button>

</body>
</html>
